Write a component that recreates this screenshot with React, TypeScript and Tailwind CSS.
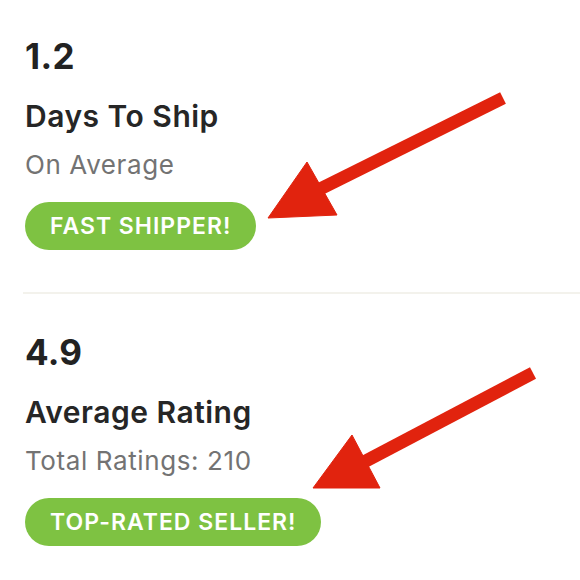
import React from "react";

type Stat = {
  value: string;
  title: string;
  sub: string;
  badge: string;
};

const stats: Stat[] = [
  { value: "1.2", title: "Days To Ship", sub: "On Average", badge: "FAST SHIPPER!" },
  { value: "4.9", title: "Average Rating", sub: "Total Ratings: 210", badge: "TOP-RATED SELLER!" },
];

function StatBlock({ stat }: { stat: Stat }) {
  return (
    <div className="flex flex-col items-start">
      <div className="text-[35px] leading-[40px] font-bold text-[#222] tracking-[0.3px]">{stat.value}</div>
      <div className="mt-[22px] text-[30px] leading-[36px] font-semibold text-[#262626] tracking-[0.5px]">
        {stat.title}
      </div>
      <div className="mt-[15px] text-[26px] leading-[32px] text-[#737373] tracking-[0.6px]">{stat.sub}</div>
      <div className="mt-[21px] h-[48px] px-[25px] rounded-full bg-[#7ec242] flex items-center text-white text-[23px] font-semibold tracking-[1px]">
        {stat.badge}
      </div>
    </div>
  );
}

export default function App() {
  return (
    <div
      className="relative w-[580px] h-[580px] bg-white overflow-hidden"
      style={{ fontFamily: 'Inter, "Liberation Sans", sans-serif' }}
    >
      <div className="pl-[25px] pt-[36px]">
        <StatBlock stat={stats[0]} />
      </div>
      <div className="ml-[23px] mt-[42px] border-t-2 border-[#f3f2ec]" />
      <div className="pl-[25px] pt-[38px]">
        <StatBlock stat={stats[1]} />
      </div>
      {/* red annotation arrows */}
      <svg viewBox="0 0 580 580" className="absolute inset-0 w-[580px] h-[580px] pointer-events-none">
        <g fill="#e1230e" stroke="#e1230e">
          <line x1="503" y1="98" x2="318" y2="190" strokeWidth="13" />
          <polygon points="268,218 307,162 337,215" strokeWidth="1" />
          <line x1="533" y1="373" x2="362" y2="463" strokeWidth="13" />
          <polygon points="313,488 352,435 380,488" strokeWidth="1" />
        </g>
      </svg>
    </div>
  );
}
